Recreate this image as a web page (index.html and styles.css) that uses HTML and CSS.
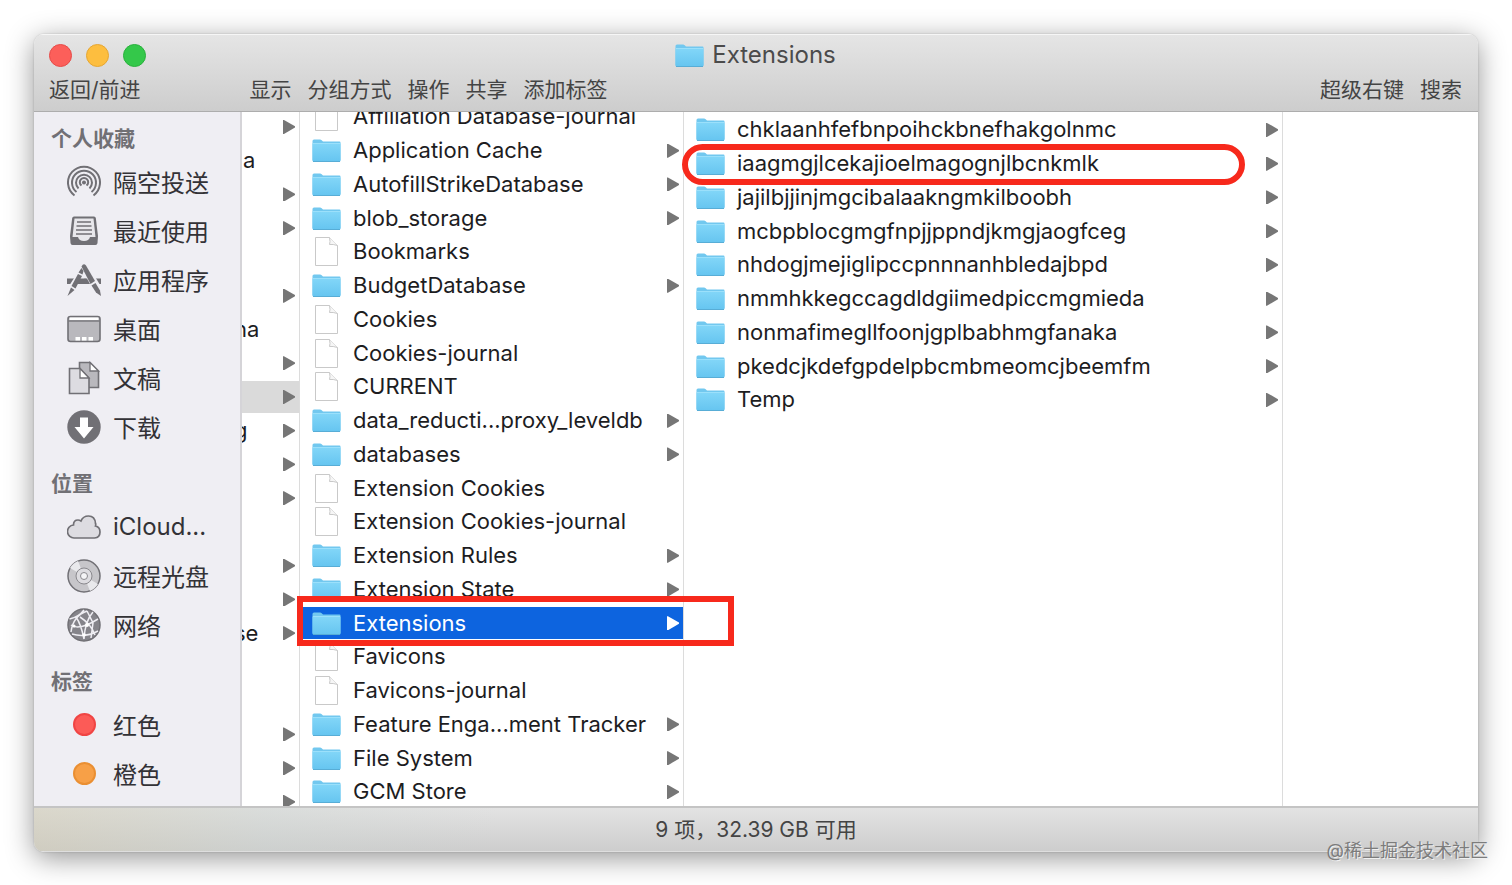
FILE: index.html
```html
<!DOCTYPE html>
<html lang="zh-CN">
<head>
    <meta charset="UTF-8">
    <title>Extensions</title>
    <link rel="stylesheet" href="styles.css">
</head>
<body>

    <!-- 图标 -->
    <svg class="icon-defs" aria-hidden="true">
        <defs>
            <linearGradient id="folderFill" x1="0" y1="0" x2="0" y2="1">
                <stop offset="0" stop-color="#82d6f8"/>
                <stop offset="1" stop-color="#66c5f0"/>
            </linearGradient>
        </defs>
        <symbol id="folder" viewBox="0 0 29 23">
            <path d="M.5 2Q.5.5 2 .5H8q1 0 1.700.8L11 2.500H27.500q1 0 1 1V21q0 1.500-1.500 1.500H2Q.5 22.500.5 21Z" fill="#72c8ef"/>
            <path d="M.5 4.500H28.500V21q0 1.500-1.500 1.500H2Q.5 22.500.5 21Z" fill="url(#folderFill)"/>
            <path d="M1 4.500H28" stroke="#9be0fb"/>
            <path d="M1 22.500H28" stroke="#58add6"/>
        </symbol>
        <symbol id="doc" viewBox="0 0 23 29">
            <path d="M.5.5H14.500L22.500 8.500V28.500H.5Z" fill="#fff" stroke="#c9c9c9"/>
            <path d="M14.500.5Q15.500 5 14.500 7.500Q18 7 22.500 8.500" fill="#f6f6f6" stroke="#c9c9c9"/>
        </symbol>
        <symbol id="airdrop" viewBox="0 0 34 34">
            <g fill="none" stroke="#717075" stroke-width="2">
                <path d="M7.500 30.500A16 16 0 1 1 26.500 30.500"/>
                <path d="M9.500 27A12 12 0 1 1 24.500 27"/>
                <path d="M11.500 23.500A8 8 0 1 1 22.500 23.500"/>
                <path d="M14.500 20.500A4.200 4.200 0 1 1 19.500 20.500"/>
            </g>
            <circle cx="17" cy="17.500" r="2" fill="#717075"/>
        </symbol>
        <symbol id="recent" viewBox="0 0 34 34">
            <path d="M7 2.500H27q1.500 0 1.800 1.500L31 22 30.500 29q-.2 2-2 2H5.500q-1.800 0-2-2L3 22 5.200 4Q5.500 2.500 7 2.500Z" fill="#717075"/>
            <path d="M7.500 4.500H26.500L28.500 23H23q-1 4-6 4t-6-4H5.500Z" fill="#e8e7eb"/>
            <path d="M10 8H24M9.500 12H24.500M9 16H25M9 20H25" stroke="#717075" stroke-width="1.700"/>
        </symbol>
        <symbol id="apps" viewBox="0 0 34 34">
            <path d="M0 15.500H34V21H0Z" fill="#717075"/>
            <path d="M15 1 32 29M20 3 3 30" stroke="#efeef3" stroke-width="9"/>
            <path d="M14.500 3.500q2-4 4.500-1L28 18l-4.500 3Z" fill="#717075"/>
            <path d="M24.500 22.500 28.500 20 33 27.500 34 33 29 29.500Z" fill="#717075"/>
            <path d="M16.500 8 14.500 5 11.500 9.500 15.500 11.500ZM11 11 15 13 8.500 25.500 4.500 23ZM4 24.500 7.500 27 .5 33Z" fill="#717075"/>
            <path d="M12.500 15.500H20L23 21H9.500Z" fill="#717075"/>
        </symbol>
        <symbol id="desktop" viewBox="0 0 34 34">
            <rect x="1" y="4.500" width="32" height="25" rx="2.500" fill="#b9b8bd" stroke="#717075" stroke-width="1.600"/>
            <path d="M2.500 5.500H31.500V8H2.500Z" fill="#fff"/>
            <path d="M1.500 9H32.500" stroke="#717075" stroke-width="1.300"/>
            <path d="M8.500 25H13V28.500H8.500ZM15 25H19.500V28.500H15ZM21.500 25H26V28.500H21.500Z" fill="#fff"/>
        </symbol>
        <symbol id="docs" viewBox="0 0 34 34">
            <path d="M12.500 1.500H23L31.500 10V26.500H12.500Z" fill="#b9b8bd" stroke="#717075" stroke-width="1.600"/>
            <path d="M23 1.500V10H31.500Z" fill="#fff" stroke="#717075" stroke-width="1.300"/>
            <path d="M2.500 7.500H13L22 17V32.500H2.500Z" fill="#dddce1" stroke="#717075" stroke-width="1.600"/>
            <path d="M13 7.500V17H22Z" fill="#fff" stroke="#717075" stroke-width="1.300"/>
        </symbol>
        <symbol id="download" viewBox="0 0 34 34">
            <circle cx="17" cy="17" r="16.700" fill="#717075"/>
            <path d="M13 7.500H21V17H26.500L17 28.500 7.500 17H13Z" fill="#fff"/>
        </symbol>
        <symbol id="cloud" viewBox="0 0 34 34">
            <path d="M7.500 28A6.500 6.500 0 0 1 6.500 15Q6.500 10 11 10 12.500 10 14 11 16 6 21.500 6 28 6 28.500 13.500 29 14.500 28.500 16 33 17 33 22 33 27.500 27.500 28Z" fill="#dddce1" stroke="#717075" stroke-width="1.700"/>
        </symbol>
        <symbol id="disc" viewBox="0 0 34 34">
            <circle cx="17" cy="17" r="16" fill="#c7c6ca" stroke="#717075" stroke-width="1.500"/>
            <path d="M17 17 3 9Q6 4 11 2ZM17 17 31 25Q28 30 23 32Z" fill="#e9e9ec"/>
            <circle cx="17" cy="17" r="8" fill="#dddce0" stroke="#8a898e"/>
            <circle cx="17" cy="17" r="3.500" fill="#f4f4f6" stroke="#8a898e"/>
        </symbol>
        <symbol id="network" viewBox="0 0 34 34">
            <circle cx="17" cy="17" r="16" fill="#85848a" stroke="#717075" stroke-width="1.500"/>
            <g fill="none" stroke="#efeef3" stroke-width="1.500">
                <path d="M2.500 11Q12 9 17 2M4 24Q6 8 20 3M4 17Q12 23 31 11M5 26Q18 30 31 23M9 9Q14 16 17 31M26 4Q18 13 17 31M13 9Q24 16 28 27M20 3 26 15 24 30"/>
            </g>
            <circle cx="20" cy="17" r="2" fill="#fff"/>
            <circle cx="17" cy="27" r="1.800" fill="#fff"/>
            <circle cx="7" cy="18" r="1.600" fill="#fff"/>
        </symbol>
    </svg>

    <main class="window">

        <!-- 工具栏 -->
        <header class="toolbar">
            <div class="titlebar">
                <div class="lights">
                    <button class="light close" aria-label="关闭"></button>
                    <button class="light minimize" aria-label="最小化"></button>
                    <button class="light zoom" aria-label="缩放"></button>
                </div>
                <h1 class="title"><svg class="folder"><use href="#folder"/></svg>Extensions</h1>
            </div>
            <div class="tools">
                <button class="tool back">返回/前进</button>
                <button class="tool">显示</button>
                <button class="tool">分组方式</button>
                <button class="tool">操作</button>
                <button class="tool">共享</button>
                <button class="tool">添加标签</button>
                <button class="tool first-right">超级右键</button>
                <button class="tool">搜索</button>
            </div>
        </header>

        <div class="content">

            <!-- 侧边栏 -->
            <nav class="sidebar">
                <section class="group">
                    <h2>个人收藏</h2>
                    <a href="#"><svg><use href="#airdrop"/></svg>隔空投送</a>
                    <a href="#"><svg><use href="#recent"/></svg>最近使用</a>
                    <a href="#"><svg><use href="#apps"/></svg>应用程序</a>
                    <a href="#"><svg><use href="#desktop"/></svg>桌面</a>
                    <a href="#"><svg><use href="#docs"/></svg>文稿</a>
                    <a href="#"><svg><use href="#download"/></svg>下载</a>
                </section>
                <section class="group">
                    <h2>位置</h2>
                    <a href="#"><svg><use href="#cloud"/></svg>iCloud...</a>
                    <a href="#"><svg><use href="#disc"/></svg>远程光盘</a>
                    <a href="#"><svg><use href="#network"/></svg>网络</a>
                </section>
                <section class="group">
                    <h2>标签</h2>
                    <a href="#"><span class="tag red"></span>红色</a>
                    <a href="#"><span class="tag orange"></span>橙色</a>
                </section>
            </nav>

            <!-- 分栏 -->
            <div class="columns">
                <div class="column parent">
                    <ul class="files">
                        <li class="dir"></li>
                        <li>a</li>
                        <li class="dir"></li>
                        <li class="dir"></li>
                        <li></li>
                        <li class="dir"></li>
                        <li class="cut">na</li>
                        <li class="dir"></li>
                        <li class="dir open"></li>
                        <li class="dir cut">g</li>
                        <li class="dir"></li>
                        <li class="dir"></li>
                        <li></li>
                        <li class="dir"></li>
                        <li class="dir"></li>
                        <li class="dir cut">se</li>
                        <li></li>
                        <li></li>
                        <li class="dir"></li>
                        <li class="dir"></li>
                        <li class="dir"></li>
                    </ul>
                </div>

                <div class="column profile">
                    <ul class="files">
                        <li><svg class="doc"><use href="#doc"/></svg>Affiliation Database-journal</li>
                        <li class="dir"><svg class="folder"><use href="#folder"/></svg>Application Cache</li>
                        <li class="dir"><svg class="folder"><use href="#folder"/></svg>AutofillStrikeDatabase</li>
                        <li class="dir"><svg class="folder"><use href="#folder"/></svg>blob_storage</li>
                        <li><svg class="doc"><use href="#doc"/></svg>Bookmarks</li>
                        <li class="dir"><svg class="folder"><use href="#folder"/></svg>BudgetDatabase</li>
                        <li><svg class="doc"><use href="#doc"/></svg>Cookies</li>
                        <li><svg class="doc"><use href="#doc"/></svg>Cookies-journal</li>
                        <li><svg class="doc"><use href="#doc"/></svg>CURRENT</li>
                        <li class="dir"><svg class="folder"><use href="#folder"/></svg>data_reducti...proxy_leveldb</li>
                        <li class="dir"><svg class="folder"><use href="#folder"/></svg>databases</li>
                        <li><svg class="doc"><use href="#doc"/></svg>Extension Cookies</li>
                        <li><svg class="doc"><use href="#doc"/></svg>Extension Cookies-journal</li>
                        <li class="dir"><svg class="folder"><use href="#folder"/></svg>Extension Rules</li>
                        <li class="dir"><svg class="folder"><use href="#folder"/></svg>Extension State</li>
                        <li class="dir selected"><svg class="folder"><use href="#folder"/></svg>Extensions</li>
                        <li><svg class="doc"><use href="#doc"/></svg>Favicons</li>
                        <li><svg class="doc"><use href="#doc"/></svg>Favicons-journal</li>
                        <li class="dir"><svg class="folder"><use href="#folder"/></svg>Feature Enga...ment Tracker</li>
                        <li class="dir"><svg class="folder"><use href="#folder"/></svg>File System</li>
                        <li class="dir"><svg class="folder"><use href="#folder"/></svg>GCM Store</li>
                    </ul>
                </div>

                <div class="column extensions">
                    <ul class="files">
                        <li class="dir"><svg class="folder"><use href="#folder"/></svg>chklaanhfefbnpoihckbnefhakgolnmc</li>
                        <li class="dir"><svg class="folder"><use href="#folder"/></svg>iaagmgjlcekajioelmagognjlbcnkmlk</li>
                        <li class="dir"><svg class="folder"><use href="#folder"/></svg>jajilbjjinjmgcibalaakngmkilboobh</li>
                        <li class="dir"><svg class="folder"><use href="#folder"/></svg>mcbpblocgmgfnpjjppndjkmgjaogfceg</li>
                        <li class="dir"><svg class="folder"><use href="#folder"/></svg>nhdogjmejiglipccpnnnanhbledajbpd</li>
                        <li class="dir"><svg class="folder"><use href="#folder"/></svg>nmmhkkegccagdldgiimedpiccmgmieda</li>
                        <li class="dir"><svg class="folder"><use href="#folder"/></svg>nonmafimegllfoonjgplbabhmgfanaka</li>
                        <li class="dir"><svg class="folder"><use href="#folder"/></svg>pkedcjkdefgpdelpbcmbmeomcjbeemfm</li>
                        <li class="dir"><svg class="folder"><use href="#folder"/></svg>Temp</li>
                    </ul>
                </div>

                <!-- 红色标注 -->
                <div class="mark mark-box"></div>
                <div class="mark mark-round"></div>
            </div>
        </div>

        <footer class="statusbar">9 项，32.39 GB 可用</footer>
    </main>

    <div class="watermark">@稀土掘金技术社区</div>

</body>
</html>
```
FILE: styles.css
```css
* { box-sizing: border-box; }

body {
    margin: 0;
    height: 100vh;
    padding: 34px 34px 33px;
    background: #fff;
    font-family: Inter, "Noto Sans CJK SC", sans-serif;
    font-size: 22px;
    color: #1d1d1f;
    overflow: hidden;
}

ul { list-style: none; margin: 0; padding: 0; }
button { border: 0; padding: 0; background: none; font: inherit; color: inherit; }
svg { flex: none; }
.icon-defs { position: absolute; width: 0; height: 0; }
.folder { width: 29px; height: 23px; }
.doc { width: 29px; height: 29px; }

.window {
    display: flex;
    flex-direction: column;
    height: 100%;
    border-radius: 10px;
    overflow: hidden;
    box-shadow: 0 0 2px rgba(0, 0, 0, 0.2), 0 6px 28px rgba(0, 0, 0, 0.42);
}

/* 工具栏 */
.toolbar {
    flex: none;
    height: 78px;
    padding: 5px 16px 0 15px;
    background: linear-gradient(#e5e5e5, #cdcdcd);
    border-top: 1px solid #f6f6f6;
    border-bottom: 1px solid #adadad;
    color: #444;
}
.titlebar {
    display: grid;
    grid-template-columns: 1fr auto 1fr;
    align-items: center;
    height: 30px;
}
.lights { display: flex; gap: 14px; }
.light { width: 23px; height: 23px; border: 1px solid; border-radius: 50%; }
.close { background: #fc5f5a; border-color: #e64b48; }
.minimize { background: #fdbe3f; border-color: #e5a633; }
.zoom { background: #34c84a; border-color: #29b03c; }
.title {
    display: flex;
    align-items: center;
    gap: 8px;
    margin: 0;
    font-size: 24px;
    font-weight: 400;
    line-height: 30px;
    color: #4b4b4b;
}
.tools { display: flex; gap: 16px; height: 40px; font-size: 21px; line-height: 40px; }
.back { margin-right: 93px; }
.first-right { margin-left: auto; }

.content { flex: 1; display: flex; min-height: 0; }

/* 侧边栏 */
.sidebar {
    flex: none;
    width: 208px;
    padding-top: 8px;
    background: #efeef3;
    border-right: 2px solid #d5d4d8;
    overflow: hidden;
}
.group { margin-bottom: 14px; }
.group h2 {
    margin: 0;
    padding-left: 17px;
    font-size: 21px;
    font-weight: 600;
    line-height: 37px;
    color: #717075;
}
.group a {
    display: flex;
    align-items: center;
    gap: 12px;
    height: 49px;
    padding-left: 33px;
    font-size: 24px;
    color: #333236;
    text-decoration: none;
}
.group svg { width: 34px; height: 34px; }
.tag { width: 23px; height: 23px; margin: 0 5px 0 6px; border: 2px solid; border-radius: 50%; }
.red { background: #fc5b57; border-color: #f04544; }
.orange { background: #f7a047; border-color: #ea8f32; }

/* 分栏 */
.columns { position: relative; flex: 1; display: flex; background: #fff; }
.column { flex: none; border-right: 1px solid #dcdcdc; overflow: hidden; }
.files { display: grid; grid-template-rows: repeat(24, 1fr); height: 810px; }
.files li {
    display: flex;
    align-items: center;
    gap: 12px;
    min-height: 0;
    padding: 0 4px 0 12px;
    border-bottom: 2px solid transparent;
    background-clip: padding-box;
    line-height: 31px;
    white-space: nowrap;
}
.dir::after {
    content: "";
    width: 12px;
    height: 14px;
    margin-left: auto;
    background: #767676;
    clip-path: polygon(0 0, 8% 0, 100% 45%, 100% 55%, 8% 100%, 0 100%);
}
.files .selected { background-color: #0d64df; color: #fff; }
.selected::after { background: #fff; }
.files .open { background-color: #dadada; }

/* 每一栏的滚动位置不同 */
.parent { width: 58px; }
.parent .files { margin-top: -1px; }
.parent .files li { padding-left: 1px; }
.parent .cut { text-indent: -9px; }
.profile { width: 384px; }
.profile .files { margin-top: -11px; }
.extensions { width: 599px; }
.extensions .files { margin-top: 2px; }

/* 标注 */
.mark { position: absolute; border: 6px solid #f7291c; }
.mark-box { left: 55px; top: 484px; width: 437px; height: 50px; }
.mark-round { left: 440px; top: 32px; width: 563px; height: 41px; border-radius: 21px; }

.statusbar {
    flex: none;
    height: 46px;
    border-top: 2px solid #c4c4c4;
    border-bottom: 1px solid #dedede;
    background:
        linear-gradient(90deg, rgba(210, 204, 180, 0.5), rgba(205, 212, 208, 0.4) 16%, transparent 32%),
        linear-gradient(#e3e3e3, #cdcdcd);
    font-size: 21px;
    line-height: 43px;
    text-align: center;
    color: #444;
}

.watermark {
    position: absolute;
    right: 24px;
    bottom: 21px;
    font-size: 18px;
    line-height: 26px;
    color: #7c7c7c;
    text-shadow: 1px 1px 0 #f0f0f0;
}
```
